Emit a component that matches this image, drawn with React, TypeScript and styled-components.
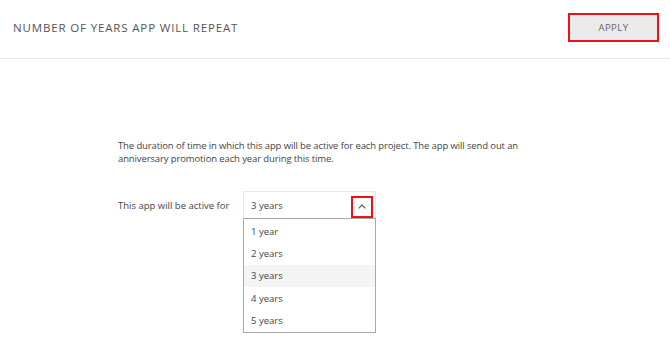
import React from "react";
import styled, { createGlobalStyle } from "styled-components";

const Global = createGlobalStyle`
  html, body { margin: 0; padding: 0; background: #ffffff; }
  body { font-family: "Open Sans", "Noto Sans", sans-serif; color: #444; }
`;

const Page = styled.div`
  width: 670px;
  height: 349px;
  overflow: hidden;
  background: #fff;
`;

const Header = styled.header`
  height: 59px;
  box-sizing: border-box;
  border-bottom: 1px solid #e6e6e6;
  display: flex;
  align-items: center;
  justify-content: space-between;
  padding: 0 11px 4px 13px;
`;

const Title = styled.h1`
  margin: 0;
  font-size: 11.5px;
  font-weight: 400;
  letter-spacing: 0.85px;
  color: #555;
`;

const ApplyButton = styled.button`
  width: 91px;
  height: 29px;
  box-sizing: border-box;
  border: 2px solid #ee1111;
  background: #ebebeb;
  color: #666;
  font-family: "Open Sans", sans-serif;
  font-size: 9.5px;
  letter-spacing: 0.5px;
  padding: 0;
`;

const Content = styled.main`
  padding: 80px 0 0 118px;
`;

const Description = styled.p`
  margin: 0;
  width: 420px;
  font-size: 9.5px;
  letter-spacing: -0.12px;
  line-height: 13px;
  color: #444;
`;

const FieldRow = styled.div`
  display: flex;
  align-items: flex-start;
  margin-top: 26px;
`;

const Label = styled.label`
  width: 125px;
  font-size: 9.5px;
  line-height: 14px;
  padding-top: 8px;
  color: #444;
`;

const SelectWrap = styled.div`
  width: 133px;
  display: flex;
  flex-direction: column;
`;

const SelectBox = styled.div`
  height: 27px;
  box-sizing: border-box;
  border: 1px solid #e8e8e8;
  border-bottom: none;
  display: flex;
  align-items: center;
  justify-content: space-between;
  padding: 0 2px 0 7px;
  font-size: 9.5px;
  color: #444;
`;

const ChevronButton = styled.span`
  width: 22px;
  height: 22px;
  box-sizing: border-box;
  border: 2px solid #ee1111;
  display: flex;
  align-items: center;
  justify-content: center;
  margin-top: 3px;
`;

const List = styled.ul`
  list-style: none;
  margin: 0;
  padding: 1px 0 1px;
  border: 1px solid #a8a8a8;
`;

const Item = styled.li<{ $active?: boolean }>`
  height: 22.3px;
  display: flex;
  align-items: center;
  padding-left: 7px;
  font-size: 9.5px;
  color: #444;
  background: ${(p) => (p.$active ? "#f4f4f4" : "transparent")};
`;

const options = ["1 year", "2 years", "3 years", "4 years", "5 years"];

export default function App() {
  return (
    <Page>
      <Global />
      <Header>
        <Title>NUMBER OF YEARS APP WILL REPEAT</Title>
        <ApplyButton>APPLY</ApplyButton>
      </Header>
      <Content>
        <Description>
          The duration of time in which this app will be active for each project. The app will send out an
          anniversary promotion each year during this time.
        </Description>
        <FieldRow>
          <Label>This app will be active for</Label>
          <SelectWrap>
            <SelectBox>
              <span>3 years</span>
              <ChevronButton>
                <svg width="8" height="5" viewBox="0 0 8 5">
                  <path d="M0.7 4.3 L4 1 L7.3 4.3" fill="none" stroke="#555" strokeWidth="1.1" />
                </svg>
              </ChevronButton>
            </SelectBox>
            <List>
              {options.map((o) => (
                <Item key={o} $active={o === "3 years"}>
                  {o}
                </Item>
              ))}
            </List>
          </SelectWrap>
        </FieldRow>
      </Content>
    </Page>
  );
}
